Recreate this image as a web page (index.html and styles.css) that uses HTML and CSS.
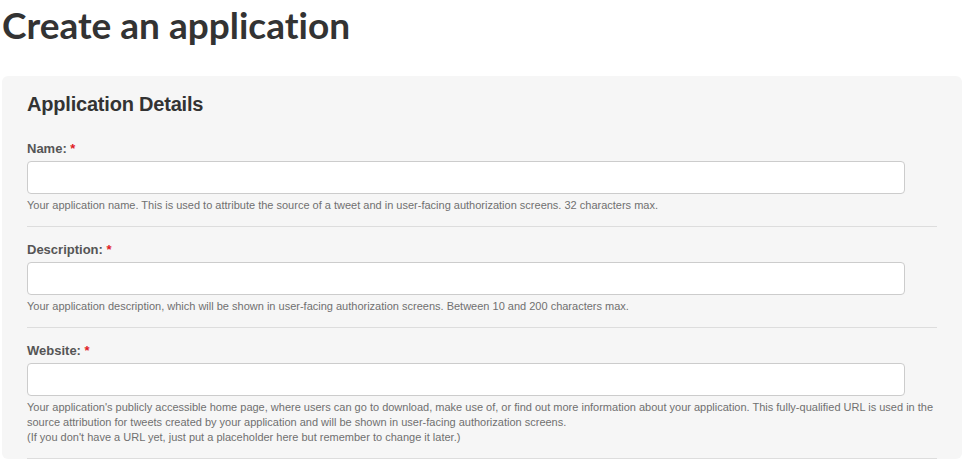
FILE: index.html
```html
<!DOCTYPE html>
<html>
<head>
<meta charset="utf-8">
<title>Create an application</title>
<link rel="stylesheet" href="styles.css">
</head>
<body>
<div class="page">
  <h1 class="page-title">Create an application</h1>
  <div class="panel">
    <h2 class="panel-title">Application Details</h2>
    <div class="field">
      <label class="field-label">Name: <span class="req">*</span></label>
      <input class="field-input" type="text">
      <p class="field-help">Your application name. This is used to attribute the source of a tweet and in user-facing authorization screens. 32 characters max.</p>
    </div>
    <div class="field">
      <label class="field-label">Description: <span class="req">*</span></label>
      <input class="field-input" type="text">
      <p class="field-help">Your application description, which will be shown in user-facing authorization screens. Between 10 and 200 characters max.</p>
    </div>
    <div class="field">
      <label class="field-label">Website: <span class="req">*</span></label>
      <input class="field-input" type="text">
      <p class="field-help">Your application's publicly accessible home page, where users can go to download, make use of, or find out more information about your application. This fully-qualified URL is used in the source attribution for tweets created by your application and will be shown in user-facing authorization screens.<br>(If you don't have a URL yet, just put a placeholder here but remember to change it later.)</p>
    </div>
  </div>
</div>
</body>
</html>
```

FILE: styles.css
```css
html, body {
  margin: 0;
  padding: 0;
  background: #ffffff;
}

.page {
  padding: 0 3px 0 2px;
}

.page-title {
  margin: 0;
  padding: 3px 0 0 0;
  height: 76px;
  box-sizing: border-box;
  font-family: "Lato", "Liberation Sans", sans-serif;
  font-weight: 700;
  font-size: 37px;
  line-height: 44px;
  color: #333333;
  font-variant-ligatures: none;
}

.panel {
  background: #f6f6f6;
  border-radius: 6px;
  padding: 16px 25px 0 25px;
  font-family: "Liberation Sans", Arial, sans-serif;
}

.panel-title {
  margin: 0 0 25px 0;
  font-size: 20px;
  line-height: 24px;
  font-weight: 700;
  color: #333333;
  letter-spacing: -0.2px;
}

.field {
  border-bottom: 1px solid #dddddd;
  margin-bottom: 15px;
}

.field-label {
  display: block;
  font-size: 13px;
  line-height: 16px;
  font-weight: 700;
  color: #555555;
  margin-bottom: 4px;
}

.req {
  color: #e0201e;
}

.field-input {
  display: block;
  box-sizing: border-box;
  width: 878px;
  height: 33px;
  margin: 0;
  padding: 4px 8px;
  border: 1px solid #cccccc;
  border-radius: 4px;
  background: #ffffff;
  font-family: "Liberation Sans", Arial, sans-serif;
  font-size: 13px;
}

.field-help {
  margin: 4px 0 13px 0;
  font-size: 11px;
  line-height: 15px;
  color: #707070;
}
```
